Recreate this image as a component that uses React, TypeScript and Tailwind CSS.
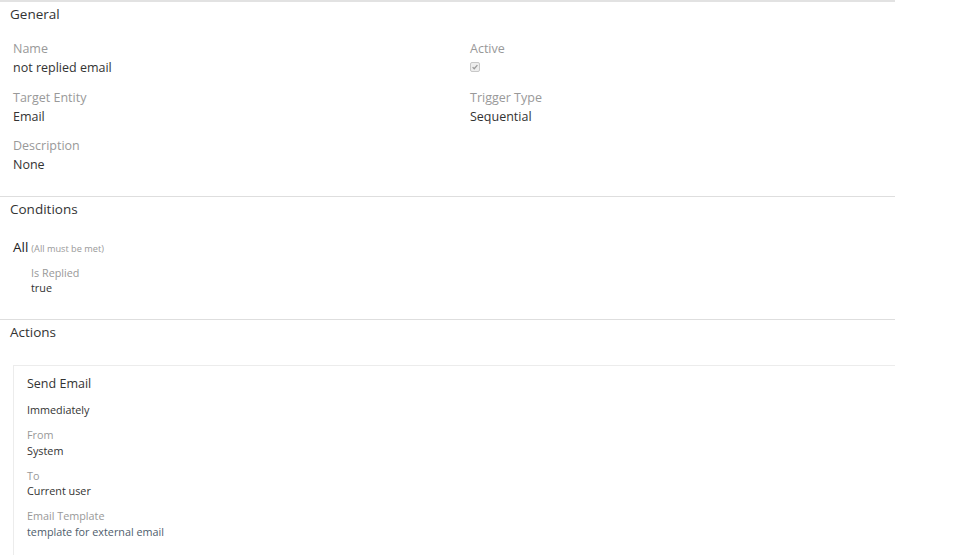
import React from "react";

const font = { fontFamily: "'Open Sans', 'Liberation Sans', sans-serif" };

function Field({ label, value }: { label: string; value: React.ReactNode }) {
  return (
    <div className="mb-[10.5px]">
      <div className="text-[12.5px] leading-[19px] text-[#999]">{label}</div>
      <div className="text-[12.5px] leading-[19px] text-[#333]">{value}</div>
    </div>
  );
}

function SmallField({ label, value, valueClass = "text-[#333]" }: { label: string; value: string; valueClass?: string }) {
  return (
    <div className="mb-[9.5px]">
      <div className="text-[10.8px] leading-[15.5px] text-[#999]">{label}</div>
      <div className={`text-[10.8px] leading-[15.5px] ${valueClass}`}>{value}</div>
    </div>
  );
}

function Heading({ children }: { children: React.ReactNode }) {
  return <h3 className="pl-[10px] pt-[2px] text-[13.5px] leading-[20px] text-[#333]">{children}</h3>;
}

function DisabledCheck() {
  return (
    <span className="mt-[4px] mb-[4px] inline-flex h-[10px] w-[10px] items-center justify-center rounded-[2px] border border-[#c8c8c8] bg-[#eeeeee]">
      <svg viewBox="0 0 10 10" className="h-[8px] w-[8px]">
        <path d="M2 5.2 L4 7.2 L8 2.6" fill="none" stroke="#9a9a9a" strokeWidth="1.6" />
      </svg>
    </span>
  );
}

export default function App() {
  return (
    <div className="h-[555px] w-[960px] overflow-hidden bg-white" style={font}>
      <div className="w-[895px]">
        {/* General */}
        <section className="border-t-2 border-[#e2e2e2] pb-[11.5px]">
          <Heading>General</Heading>
          <div className="mt-[15px] grid grid-cols-[457px_1fr] pl-[13px]">
            <div>
              <Field label="Name" value="not replied email" />
              <Field label="Target Entity" value="Email" />
              <Field label="Description" value="None" />
            </div>
            <div>
              <div className="mb-[10.5px]">
                <div className="text-[12.5px] leading-[19px] text-[#999]">Active</div>
                <div className="h-[19px] leading-[0]">
                  <DisabledCheck />
                </div>
              </div>
              <Field label="Trigger Type" value="Sequential" />
            </div>
          </div>
        </section>

        {/* Conditions */}
        <section className="border-t border-[#dedede] pb-[24px]">
          <Heading>Conditions</Heading>
          <div className="mt-[19px] pl-[13px]">
            <div className="flex items-baseline gap-[3px] leading-[18px]">
              <span className="text-[13.5px] text-[#222]">All</span>
              <span className="text-[9.2px] text-[#999]">(All must be met)</span>
            </div>
            <div className="mt-[7px] pl-[18px]">
              <div className="text-[10.8px] leading-[15px] text-[#999]">Is Replied</div>
              <div className="text-[10.8px] leading-[15px] text-[#333]">true</div>
            </div>
          </div>
        </section>

        {/* Actions */}
        <section className="border-t border-[#dedede]">
          <Heading>Actions</Heading>
          <div className="ml-[13px] mt-[23px] border-l border-t border-[#ececec] pl-[13px] pt-[9px] pb-[12px]">
            <div className="text-[12.5px] leading-[18px] text-[#333]">Send Email</div>
            <div className="mt-[9px] mb-[9px] text-[10.8px] leading-[16px] text-[#333]">Immediately</div>
            <SmallField label="From" value="System" />
            <SmallField label="To" value="Current user" />
            <SmallField label="Email Template" value="template for external email" valueClass="text-[#4e5d6c]" />
          </div>
        </section>
      </div>
    </div>
  );
}
